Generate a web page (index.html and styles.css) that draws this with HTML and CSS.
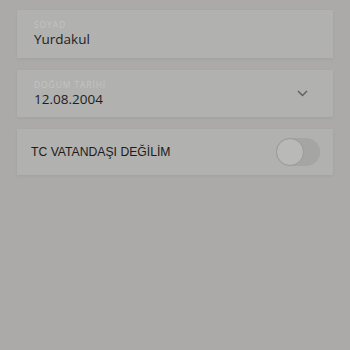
FILE: index.html
```html
<!DOCTYPE html>
<html>
<head>
<meta charset="utf-8">
<link rel="stylesheet" href="styles.css">
</head>
<body>
<div class="form">
  <div class="card field">
    <div class="label">SOYAD</div>
    <div class="value">Yurdakul</div>
  </div>
  <div class="card field select">
    <div class="texts">
      <div class="label">DOĞUM TARİHİ</div>
      <div class="value">12.08.2004</div>
    </div>
    <svg class="chev" width="11" height="7" viewBox="0 0 11 7"><path d="M1 1 L5.5 5.5 L10 1" fill="none" stroke="#5e5e5c" stroke-width="1.4"/></svg>
  </div>
  <div class="card toggle-row">
    <span class="tlabel">TC VATANDAŞI DEĞİLİM</span>
    <span class="switch"><span class="knob"></span></span>
  </div>
</div>
</body>
</html>
```
FILE: styles.css
```css
html, body {
  margin: 0;
  padding: 0;
  background: #abaaa9;
  width: 350px;
  height: 350px;
  overflow: hidden;
}
.form {
  display: flex;
  flex-direction: column;
  gap: 12px;
  padding: 10px 17px 0 17px;
}
.card {
  background: #b1b1af;
  box-shadow: 0 1px 3px rgba(0,0,0,0.06);
}
.field {
  height: 48px;
  box-sizing: border-box;
  padding: 9px 17px 0 17px;
  font-family: "Open Sans", "Noto Sans", sans-serif;
}
.label {
  font-size: 8.5px;
  line-height: 11px;
  color: #c4c4c2;
  letter-spacing: 0.9px;
}
.value {
  font-size: 13.5px;
  line-height: 18px;
  color: #1e1e1e;
}
.select {
  display: flex;
  align-items: center;
  justify-content: space-between;
  padding-top: 0;
  height: 47px;
}
.chev {
  margin-right: 8px;
  margin-top: 0;
}
.toggle-row {
  height: 46px;
  display: flex;
  align-items: center;
  justify-content: space-between;
  padding: 0 13px 0 14px;
}
.tlabel {
  font-family: "Liberation Sans", Arial, sans-serif;
  font-size: 12.2px;
  color: #1c1c1c;
}
.switch {
  width: 44px;
  height: 28px;
  border-radius: 14px;
  background: #a5a5a3;
  position: relative;
  display: block;
}
.knob {
  position: absolute;
  left: 0;
  top: 0;
  width: 26px;
  height: 26px;
  border-radius: 50%;
  background: #b9b9b7;
  border: 1px solid #9a9a98;
}
```
